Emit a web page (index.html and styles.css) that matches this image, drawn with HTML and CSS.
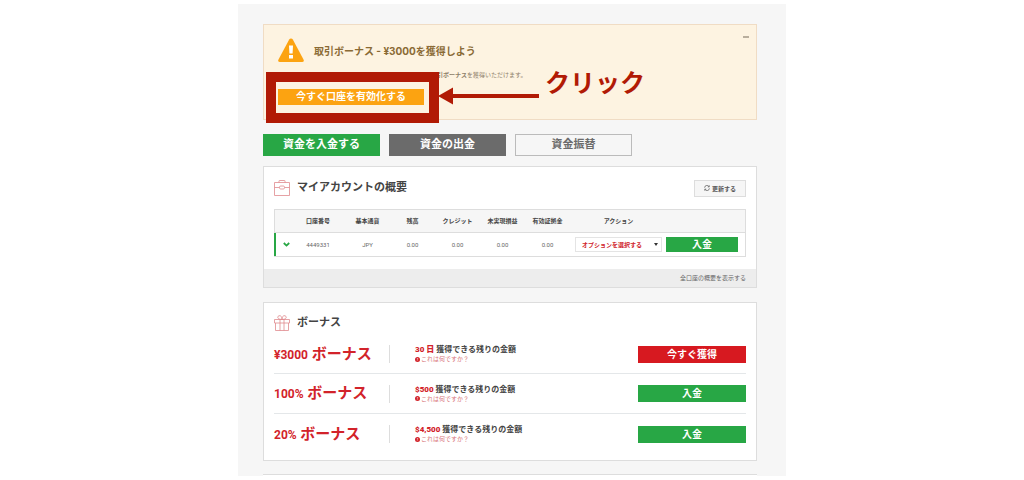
FILE: index.html
```html
<!DOCTYPE html>
<html lang="ja">
<head>
<meta charset="utf-8">
<title>マイアカウントの概要</title>
<link rel="stylesheet" href="styles.css">
</head>
<body>
<main class="panel">
  <section class="alert">
    <button class="collapse" type="button" aria-label="閉じる"></button>
    <div class="alert-head">
      <svg class="warn" viewBox="0 0 26 24" aria-hidden="true"><path d="M13 0.5Q14.2 0.5 14.8 1.6L25.5 21.5Q26.6 24 24 24H2Q-0.6 24 0.5 21.5L11.2 1.6Q11.8 0.5 13 0.5Z" fill="#fca311"/><path d="M11 7.500h4l-.4 8h-3.200zM11 17h4v3.600h-4z" fill="#fff"/></svg>
      <h2 class="alert-title">取引ボーナス - ¥3000を獲得しよう</h2>
    </div>
    <p class="alert-text"><b>取引ボーナス</b>を獲得いただけます。</p>
    <button class="btn activate" type="button">今すぐ口座を有効化する</button>
    <div class="frame"></div>
    <div class="callout">
      <svg class="arrow" viewBox="0 0 101 18" aria-hidden="true"><path d="M0 9L15 .5V7H101V11H15V17.500Z" fill="#b11a05"/></svg>
      <span>クリック</span>
    </div>
  </section>

  <nav class="actions">
    <button class="btn green" type="button">資金を入金する</button>
    <button class="btn gray" type="button">資金の出金</button>
    <button class="btn outline" type="button">資金振替</button>
  </nav>

  <section class="card">
    <div class="card-head">
      <svg class="icon" viewBox="0 0 16 16" fill="none" stroke="#e08a8e" stroke-width=".8" aria-hidden="true"><path d="M.5 2.500h15v13H.5zM5 2.500V1q0-.5.5-.5h5q.5 0 .5.500v1.500M.5 7.500h5M10.500 7.500h5"/><rect x="5.500" y="6" width="5" height="3" rx="1.200"/></svg>
      <h2 class="title">マイアカウントの概要</h2>
      <button class="refresh" type="button"><svg class="sync" viewBox="0 0 8 8" fill="none" stroke="#555" aria-hidden="true"><path d="M.8 3.500A3.100 3.100 0 0 1 6.500 2M7.200 4.500A3.100 3.100 0 0 1 1.500 6M7 .5V2.500H5M1 7.500V5.500H3"/></svg>更新する</button>
    </div>
    <table class="accounts">
      <colgroup><col class="c-toggle"><col class="c-number"><col class="c-wide"><col class="c-slim"><col class="c-wide"><col class="c-slim"><col class="c-wide"><col class="c-option"><col class="c-deposit"></colgroup>
      <thead>
        <tr><th></th><th>口座番号</th><th>基本通貨</th><th>残高</th><th>クレジット</th><th>未実現損益</th><th>有効証拠金</th><th>アクション</th><th></th></tr>
      </thead>
      <tbody>
        <tr>
          <td><svg class="chevron" viewBox="0 0 7 5" fill="none" stroke="#28a745" stroke-width="1.800" aria-hidden="true"><path d="M.8 1L3.500 3.600 6.200 1"/></svg></td>
          <td>4449331</td><td>JPY</td><td>0.00</td><td>0.00</td><td>0.00</td><td>0.00</td>
          <td><span class="select-box"><select class="option" aria-label="アクション"><option>オプションを選択する</option></select></span></td>
          <td class="deposit-cell"><button class="btn green deposit" type="button">入金</button></td>
        </tr>
      </tbody>
    </table>
    <div class="card-foot"><a class="foot-link" href="#">全口座の概要を表示する</a></div>
  </section>

  <section class="card bonus">
    <div class="card-head">
      <svg class="icon" viewBox="0 0 16 16" fill="none" stroke="#e08a8e" stroke-width=".8" aria-hidden="true"><path d="M.5 4.500h15v3.500H.5zM1.500 8v7.500h13V8M6 4.500v11M10 4.500v11M8 4.500C3 4.500 3 1.500 5 .7 7 .3 8 2 8 4.500 8 2 9 .3 11 .7 13 1.500 13 4.500 8 4.500"/></svg>
      <h2 class="title">ボーナス</h2>
    </div>
    <div class="row">
      <h3 class="name"><span class="amount">¥3000</span> ボーナス</h3>
      <div class="info"><p class="left"><b class="red">30 日</b> 獲得できる残りの金額</p><a class="what" href="#"><span class="bang">!</span>これは何ですか？</a></div>
      <button class="btn claim" type="button">今すぐ獲得</button>
    </div>
    <div class="row">
      <h3 class="name"><span class="amount">100%</span> ボーナス</h3>
      <div class="info"><p class="left"><b class="red">$500</b> 獲得できる残りの金額</p><a class="what" href="#"><span class="bang">!</span>これは何ですか？</a></div>
      <button class="btn green" type="button">入金</button>
    </div>
    <div class="row">
      <h3 class="name"><span class="amount">20%</span> ボーナス</h3>
      <div class="info"><p class="left"><b class="red">$4,500</b> 獲得できる残りの金額</p><a class="what" href="#"><span class="bang">!</span>これは何ですか？</a></div>
      <button class="btn green" type="button">入金</button>
    </div>
  </section>
  <div class="next-card"></div>
</main>
</body>
</html>
```
FILE: styles.css
```css
* { box-sizing: border-box; }
body { margin: 0; background: #fff; color: #444; font-family: Roboto, "Noto Sans CJK JP", sans-serif; }
h2, h3, p { margin: 0; }
button, select { font-family: inherit; cursor: pointer; }
a { text-decoration: none; }
svg { display: block; flex: none; }

.panel { max-width: 548px; margin: 4px auto 0; padding: 20px 29px 0 25px; background: #f6f6f6; }
.btn { border: 0; padding: 0; color: #fff; font-weight: 700; font-size: 10px; line-height: 16px; text-align: center; }
.green { background: #28a745; }
.gray { background: #6b6b6b; }

.alert { position: relative; height: 96px; padding: 13px 14px; background: #fdf3e1; border: 1px solid #f0dcc4; }
.alert-head { display: flex; align-items: center; gap: 10px; }
.warn { width: 26px; height: 24px; }
.alert-title { padding-top: 2px; font-family: Inter, "Noto Sans CJK JP", sans-serif; font-size: 10px; line-height: 22px; color: #8a6a35; }
.collapse { position: absolute; top: 11px; right: 7px; width: 6px; height: 2px; padding: 0; border: 0; background: #b9ae9d; }
.alert-text { padding: 8px 0 0 153px; font-size: 6px; line-height: 10px; color: #8d8069; }
.activate { display: block; width: 146px; margin-top: 9px; font-size: 10px; background: #fca311; }
.frame { position: absolute; left: 2px; top: 47px; width: 173px; height: 51px; border: 10px solid #b11a05; }
.callout { position: absolute; left: 174px; top: 38px; display: flex; align-items: center; gap: 6px; color: #b11a05; font-size: 25px; font-weight: 700; line-height: 36px; }
.arrow { width: 101px; height: 18px; margin-top: 24px; }

.actions { display: grid; grid-template-columns: repeat(3, 117px); gap: 9px; margin: 14px 0 10px; }
.actions .btn { font-size: 11px; line-height: 22px; }
.actions .outline { line-height: 20px; border: 1px solid #bbb; background: #f6f6f6; color: #6b6b6b; }

.card { background: #fff; border: 1px solid #ddd; }
.card-head { display: flex; align-items: center; gap: 7px; height: 42px; padding: 0 10px; }
.icon { width: 16px; height: 16px; }
.title { font-size: 11px; line-height: 16px; }
.refresh { display: flex; align-items: center; gap: 2px; height: 17px; margin-left: auto; padding: 0 9px; border: 1px solid #ddd; background: #f6f6f6; color: #555; font-size: 6px; font-weight: 700; }
.sync { width: 6px; height: 6px; }

.accounts { width: calc(100% - 20px); margin: 0 10px 12px; table-layout: fixed; border-collapse: separate; border-spacing: 0; border: 1px solid #ddd; border-left: 0; font-size: 6px; line-height: 10px; text-align: center; }
.accounts th, .accounts td { padding: 0; white-space: nowrap; }
.accounts th { height: 23px; background: #f6f6f6; border-bottom: 1px solid #ddd; }
.accounts th:first-child { border-left: 1px solid #ddd; }
.accounts td { height: 23px; color: #666; }
.accounts td:first-child { border-left: 2px solid #28a745; }
.c-toggle { width: 22px; }
.c-number { width: 44px; }
.c-wide { width: 55px; }
.c-slim { width: 35px; }
.c-option { width: 87px; }
.chevron { width: 7px; height: 5px; margin: 0 auto; }
.select-box { position: relative; display: block; }
.select-box::after { content: ""; position: absolute; right: 4px; top: 6px; border: 2px solid transparent; border-top: 3px solid #333; border-bottom: 0; pointer-events: none; }
.option { display: block; width: 100%; height: 15px; padding: 0 6px; appearance: none; border: 1px solid #e4e4e4; border-radius: 0; background: #fff; color: #cf2229; font-size: 6px; font-weight: 700; }
.accounts .deposit-cell { padding: 0 7px 0 4px; }
.deposit { display: block; width: 100%; line-height: 15px; }
.card-foot { padding: 0 10px; background: #ededed; font-size: 6px; line-height: 18px; text-align: right; }
.foot-link { color: #666; }

.bonus { margin-top: 14px; padding-bottom: 6px; }
.bonus .card-head { height: 36px; padding-top: 3px; }
.row { display: grid; grid-template-columns: 115px 1fr 108px; align-items: center; height: 40px; margin: 0 10px; border-bottom: 1px solid #e4e7e9; }
.row:nth-child(2) { height: 35px; padding-bottom: 4px; }
.row:last-child { border-bottom: 0; }
.row .btn { line-height: 17px; }
.name { color: #d2232a; font-size: 15px; line-height: 20px; white-space: nowrap; }
.amount { font-size: 12px; }
.info { padding-left: 25px; border-left: 1px solid #ddd; }
.left { font-size: 8px; line-height: 10px; font-weight: 700; }
.red { color: #d2232a; }
.what { display: flex; align-items: center; gap: 1px; color: #d8757a; font-size: 6px; line-height: 8px; }
.bang { width: 5px; height: 5px; border-radius: 50%; background: #d2232a; color: #fff; font-size: 4px; font-weight: 700; line-height: 5px; text-align: center; }
.claim { background: #d71920; }
.next-card { height: 2px; margin-top: 13px; border-top: 1px solid #ddd; background: #fff; }
```
